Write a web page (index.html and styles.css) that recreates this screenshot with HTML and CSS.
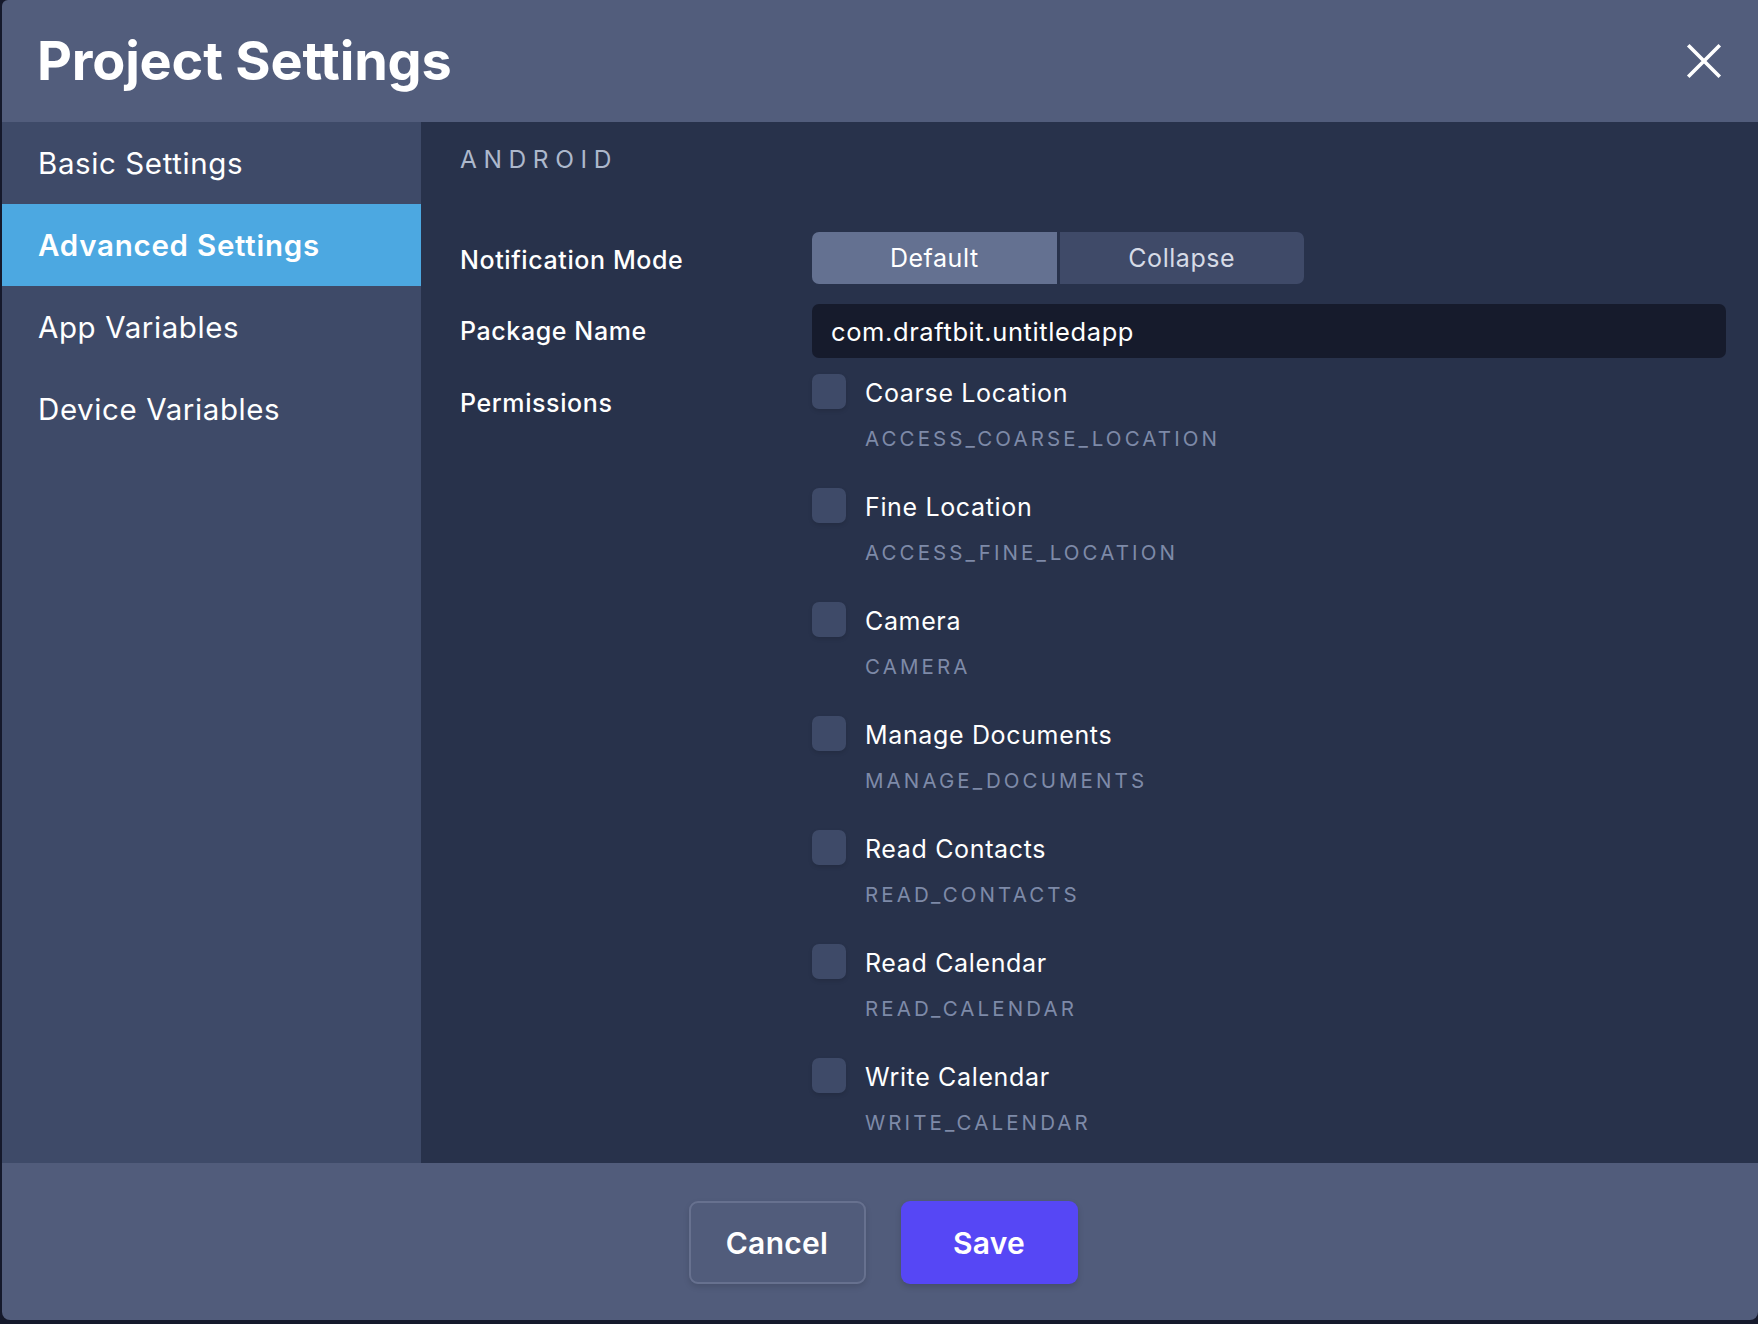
FILE: index.html
```html
<!DOCTYPE html>
<html lang="en">
<head>
<meta charset="utf-8">
<title>Project Settings</title>
<link rel="stylesheet" href="styles.css">
</head>
<body>
<div class="modal">
  <header class="modal-header">
    <h1 class="modal-title">Project Settings</h1>
    <button class="close-btn" aria-label="Close">
      <svg width="36" height="36" viewBox="0 0 36 36"><path d="M3.5 3.5 L32.5 32.5 M32.5 3.5 L3.5 32.5" stroke="#ffffff" stroke-width="3.6" stroke-linecap="square"/></svg>
    </button>
  </header>
  <div class="modal-body">
    <nav class="sidebar">
      <div class="nav-item">Basic Settings</div>
      <div class="nav-item active">Advanced Settings</div>
      <div class="nav-item">App Variables</div>
      <div class="nav-item">Device Variables</div>
    </nav>
    <main class="content">
      <div class="section-title">ANDROID</div>
      <div class="form">
        <div class="row row-notif">
          <div class="label">Notification Mode</div>
          <div class="segmented">
            <div class="seg seg-active">Default</div>
            <div class="seg">Collapse</div>
          </div>
        </div>
        <div class="row row-package">
          <div class="label">Package Name</div>
          <div class="input">com.draftbit.untitledapp</div>
        </div>
        <div class="row row-perms">
          <div class="label label-perms">Permissions</div>
          <div class="perms">
            <div class="perm"><div class="checkbox"></div><div class="perm-title">Coarse Location</div><div class="perm-sub">ACCESS_COARSE_LOCATION</div></div>
            <div class="perm"><div class="checkbox"></div><div class="perm-title">Fine Location</div><div class="perm-sub">ACCESS_FINE_LOCATION</div></div>
            <div class="perm"><div class="checkbox"></div><div class="perm-title">Camera</div><div class="perm-sub">CAMERA</div></div>
            <div class="perm"><div class="checkbox"></div><div class="perm-title">Manage Documents</div><div class="perm-sub">MANAGE_DOCUMENTS</div></div>
            <div class="perm"><div class="checkbox"></div><div class="perm-title">Read Contacts</div><div class="perm-sub">READ_CONTACTS</div></div>
            <div class="perm"><div class="checkbox"></div><div class="perm-title">Read Calendar</div><div class="perm-sub">READ_CALENDAR</div></div>
            <div class="perm"><div class="checkbox"></div><div class="perm-title">Write Calendar</div><div class="perm-sub">WRITE_CALENDAR</div></div>
          </div>
        </div>
      </div>
    </main>
  </div>
  <footer class="modal-footer">
    <button class="btn btn-cancel">Cancel</button>
    <button class="btn btn-save">Save</button>
  </footer>
</div>
</body>
</html>
```

FILE: styles.css
```css
* { box-sizing: border-box; }
html, body { margin: 0; padding: 0; }
body {
  background: #15192b;
  font-family: Inter, "Noto Sans", sans-serif;
  color: #ffffff;
  width: 1758px;
  height: 1324px;
  overflow: hidden;
}
.modal {
  margin-left: 2px;
  width: 1756px;
  height: 1320px;
  display: flex;
  flex-direction: column;
  border-radius: 6px 0 8px 8px;
  overflow: hidden;
}
.modal-header {
  height: 122px;
  flex: 0 0 122px;
  background: #525d7c;
  display: flex;
  align-items: center;
  justify-content: space-between;
  padding: 0 36px 0 35px;
}
.modal-title {
  margin: 0;
  font-size: 54px;
  font-weight: 700;
  letter-spacing: -0.2px;
  line-height: 1;
}
.close-btn {
  background: none;
  border: 0;
  padding: 0;
  width: 36px;
  height: 36px;
  display: flex;
}
.modal-body {
  flex: 1;
  display: flex;
  min-height: 0;
}
.sidebar {
  width: 419px;
  flex: 0 0 419px;
  background: #3e4a68;
  display: flex;
  flex-direction: column;
}
.nav-item {
  height: 82px;
  display: flex;
  align-items: center;
  padding-left: 36px;
  padding-bottom: 1px;
  font-size: 29.5px;
  font-weight: 400;
  letter-spacing: 0.6px;
  color: #ffffff;
}
.nav-item.active {
  background: #4ca8e1;
  font-weight: 600;
  letter-spacing: 0.75px;
}
.content {
  flex: 1;
  background: #28324b;
  padding: 22px 32px 0 39px;
}
.section-title {
  font-size: 24.5px;
  letter-spacing: 6.6px;
  color: #adb8cc;
  line-height: 30px;
}
.form {
  margin-top: 58px;
  display: flex;
  flex-direction: column;
}
.row {
  display: flex;
}
.label {
  width: 352px;
  flex: 0 0 352px;
  font-size: 25px;
  font-weight: 500;
  letter-spacing: 0.6px;
  line-height: 34px;
}
.row-notif { align-items: center; height: 52px; }
.row-notif .label { padding-top: 4px; }
.row-package { align-items: center; height: 54px; margin-top: 20px; }
.row-perms { margin-top: 16px; }
.label-perms { padding-top: 12px; }
.segmented {
  display: flex;
  gap: 3px;
  width: 492px;
  height: 52px;
  border-radius: 7px;
  overflow: hidden;
}
.seg {
  flex: 1;
  background: #3f4a68;
  display: flex;
  align-items: center;
  justify-content: center;
  font-size: 25px;
  letter-spacing: 0.55px;
  color: #d6dbe6;
}
.seg-active {
  background: #647191;
  color: #ffffff;
}
.input {
  width: 914px;
  height: 54px;
  background: #161b2c;
  border-radius: 7px;
  display: flex;
  align-items: center;
  padding-left: 19px;
  font-size: 25.5px;
  letter-spacing: 0.6px;
  color: #ffffff;
}
.perms {
  display: flex;
  flex-direction: column;
}
.perm {
  display: grid;
  grid-template-columns: 34px 1fr;
  grid-template-rows: auto auto;
  align-content: start;
  column-gap: 19px;
  height: 114px;
}
.checkbox {
  width: 34px;
  height: 35px;
  background: #3e4a68;
  border-radius: 7px;
  box-shadow: 0 2px 4px rgba(0,0,0,0.12);
}
.perm-title {
  font-size: 25px;
  letter-spacing: 0.65px;
  line-height: 36px;
  margin-top: 1px;
}
.perm-sub {
  grid-column: 2;
  font-size: 20.5px;
  letter-spacing: 3.1px;
  color: #7e8aa8;
  line-height: 28px;
  margin-top: 14px;
}
.modal-footer {
  height: 157px;
  flex: 0 0 157px;
  background: #515c7b;
  display: flex;
  justify-content: center;
  align-items: flex-start;
  padding-top: 38px;
  padding-left: 6px;
  gap: 35px;
}
.btn {
  width: 177px;
  height: 83px;
  border-radius: 9px;
  font-family: Inter, "Noto Sans", sans-serif;
  font-size: 30px;
  font-weight: 600;
  letter-spacing: 0.3px;
  color: #ffffff;
  cursor: pointer;
}
.btn-cancel {
  background: transparent;
  border: 2px solid #67718f;
  box-shadow: 0 3px 6px rgba(0,0,0,0.12);
}
.btn-save {
  background: #5647f5;
  border: 0;
  box-shadow: 0 3px 6px rgba(0,0,0,0.15);
}
```
